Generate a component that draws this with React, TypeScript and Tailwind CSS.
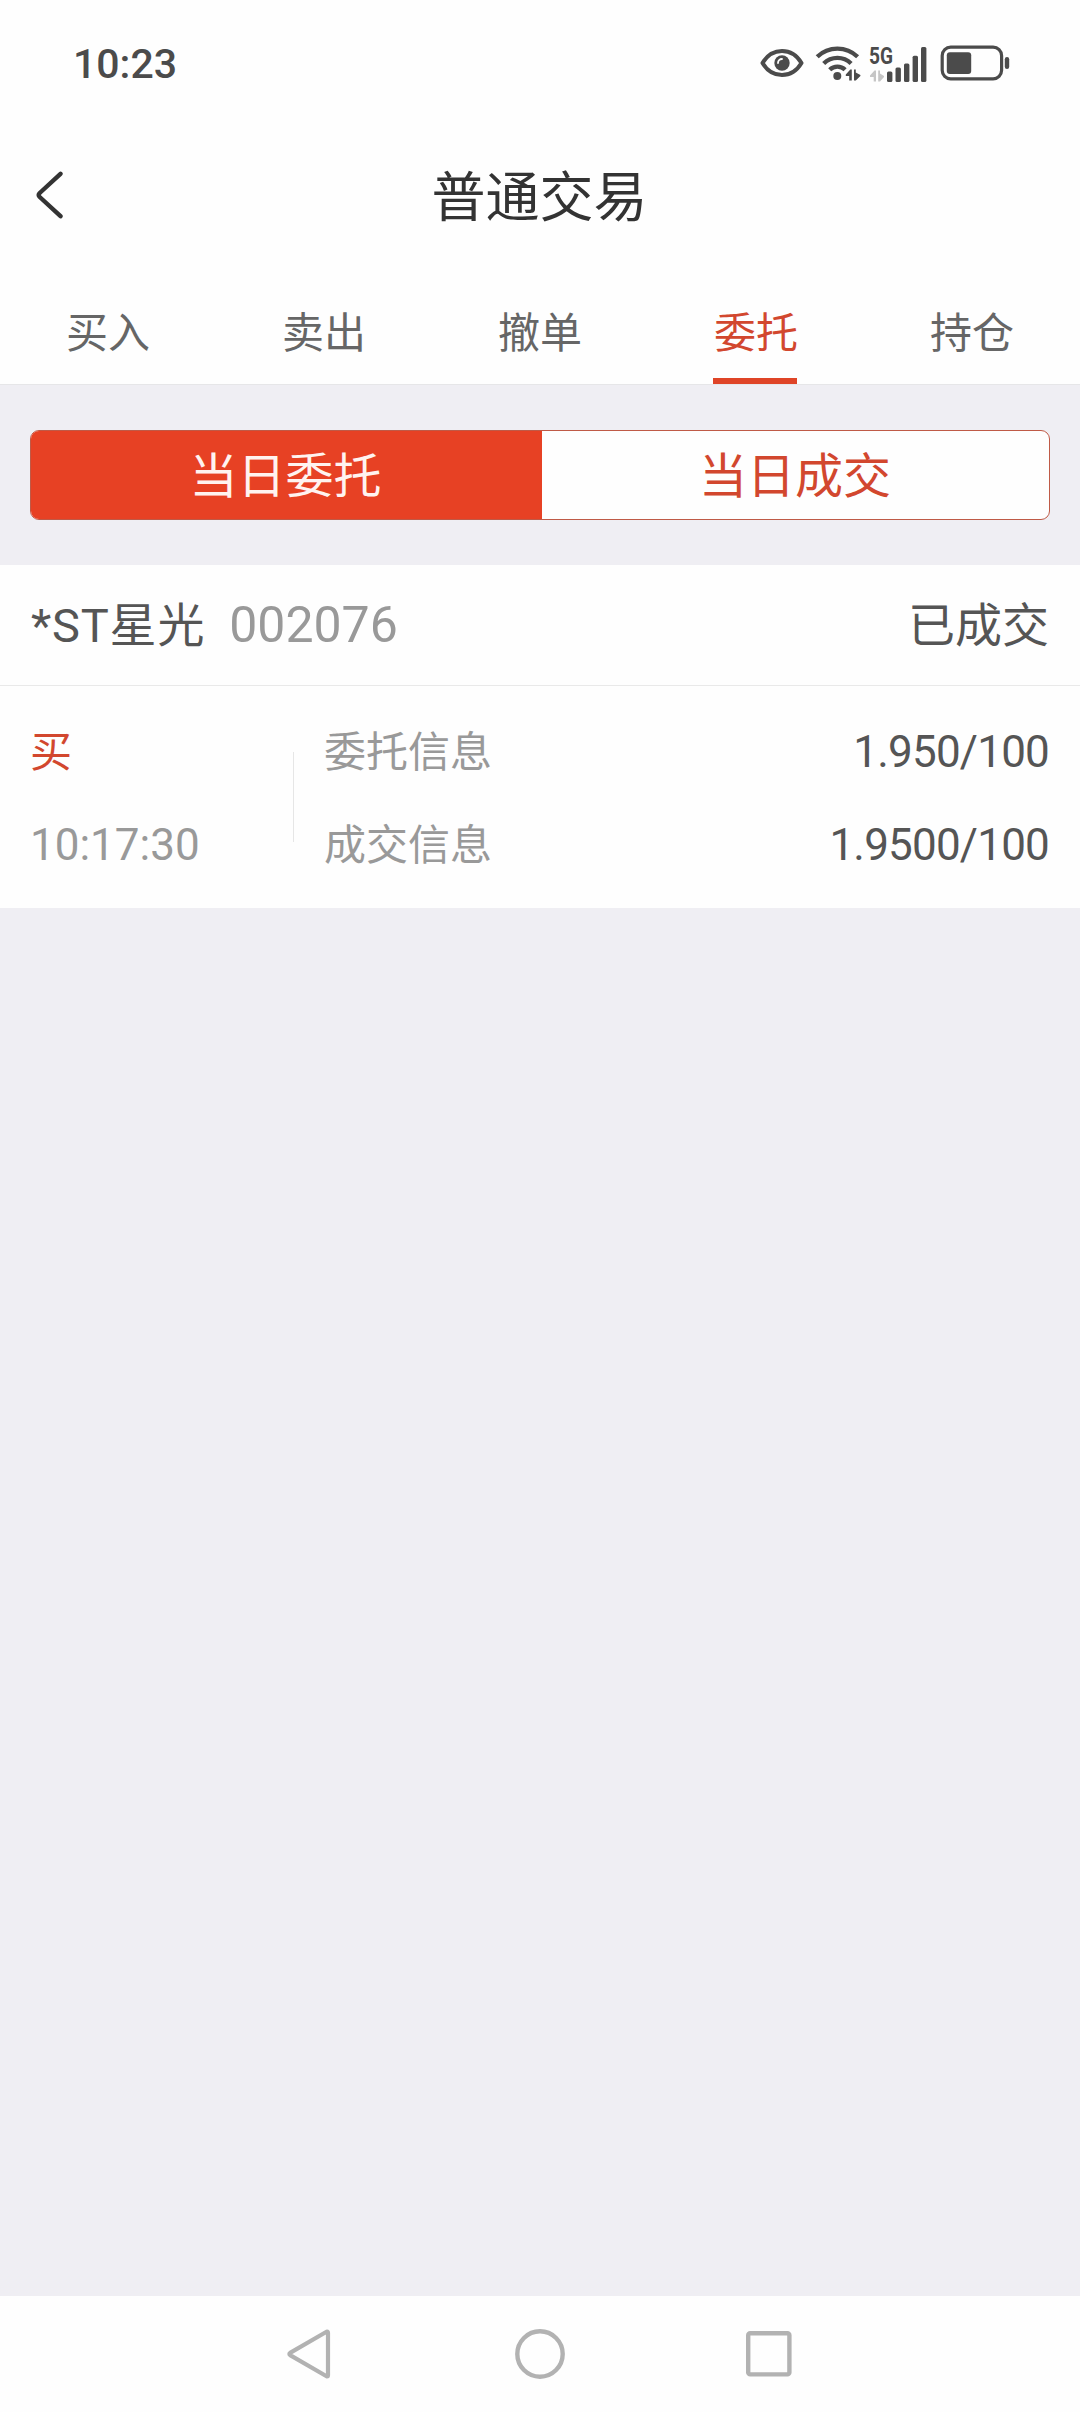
import clsx from "clsx";

const tabs = ["买入", "卖出", "撤单", "委托", "持仓"];

const orders = [
  {
    name: "*ST星光",
    code: "002076",
    status: "已成交",
    side: "买",
    time: "10:17:30",
    entrust: "1.950/100",
    deal: "1.9500/100",
  },
];

function EyeIcon() {
  return (
    <svg width="44" height="30" viewBox="0 0 44 30" fill="none">
      <path d="M2.500 15C7 7.500 14 3 22 3s15 4.500 19.500 12C37 22.500 30 27 22 27S7 22.500 2.500 15Z" stroke="#4b4b4b" strokeWidth="4" strokeLinejoin="round" />
      <circle cx="22" cy="15" r="7.700" fill="#4b4b4b" />
      <path d="M18 15a4 4 0 0 1 4-4" stroke="#fefefe" strokeWidth="1.800" strokeLinecap="round" />
    </svg>
  );
}

function WifiIcon() {
  return (
    <svg width="46" height="36" viewBox="0 0 46 36" fill="none">
      <g stroke="#4b4b4b" strokeWidth="4.300">
        <path d="M2.200 11.800a29 29 0 0 1 40.400 0" />
        <path d="M8.700 18.500a19.500 19.500 0 0 1 27.400 0" />
        <path d="M14.700 24.700a11 11 0 0 1 15.400 0" />
      </g>
      <circle cx="22.300" cy="31" r="4" fill="#4b4b4b" />
      <path d="M36.800 24.500v11h-2.600v-4.500h-3.400v-1.500l4.500-5zM39 24.500h1.800v3l4.600 2.500v1l-4.600 4.500H39z" fill="#4b4b4b" />
    </svg>
  );
}

function SignalIcon() {
  return (
    <svg width="60" height="50" viewBox="-2 -6 60 50">
      <text x="0" y="19.700" fontFamily="Roboto, sans-serif" fontSize="23.500" fontWeight="700" textLength="24" lengthAdjust="spacingAndGlyphs" fill="#4b4b4b">5G</text>
      <path d="M7 26.500v11H4.700V33H1v-1.500l4.500-5zM9.200 26.500H11v3l4 2.500v1l-4 4.500H9.200z" fill="#c6c6c6" />
      <g fill="#4b4b4b">
        <rect x="18" y="27.500" width="5.400" height="10.500" rx="1.500" />
        <rect x="26.500" y="23.500" width="5.400" height="14.500" rx="1.500" />
        <rect x="35" y="19.500" width="5.400" height="18.500" rx="1.500" />
        <rect x="43.600" y="11.700" width="5.400" height="26.300" rx="1.500" />
        <rect x="52" y="3" width="5.400" height="35" rx="1.500" />
      </g>
    </svg>
  );
}

function BatteryIcon() {
  return (
    <svg width="70" height="36" viewBox="0 0 70 36" fill="none">
      <rect x="2.200" y="2.200" width="59.400" height="31.600" rx="8.500" stroke="#4b4b4b" strokeWidth="3.200" />
      <rect x="6.800" y="7.300" width="24.400" height="21.600" rx="3" fill="#4b4b4b" />
      <rect x="64.800" y="12" width="4.400" height="12" rx="2.200" fill="#4b4b4b" />
    </svg>
  );
}

function StatusBar() {
  return (
    <div className="flex h-[126px] items-center justify-between pl-[73px] pr-[70px]">
      <span className="pt-[3px] font-[Roboto] text-[41px] font-medium text-[#4b4b4b]">10:23</span>
      <div className="flex items-center">
        <EyeIcon />
        <div className="ml-[11px]">
          <WifiIcon />
        </div>
        <div className="ml-[6px]">
          <SignalIcon />
        </div>
        <div className="ml-[13px]">
          <BatteryIcon />
        </div>
      </div>
    </div>
  );
}

function Header() {
  return (
    <header className="grid h-[133px] grid-cols-[200px_1fr_200px] items-center">
      <button className="pl-9 pt-[5px]">
        <svg width="28" height="48" viewBox="0 0 28 48" fill="none">
          <path d="M24.500 2.800 3.700 22Q1.800 24 3.700 26L24.500 45.200" stroke="#333" strokeWidth="4.400" strokeLinecap="round" strokeLinejoin="round" />
        </svg>
      </button>
      <h1 className="pr-px pt-[2px] text-center text-[54px] leading-[80px] text-[#333]">普通交易</h1>
    </header>
  );
}

function Tabs({ active }: { active: string }) {
  return (
    <nav className="grid h-[125px] grid-cols-5">
      {tabs.map((tab) => (
        <button key={tab} className="flex flex-col items-center justify-between pt-[41px]">
          <span className={clsx("text-[42px] leading-[60px]", tab === active ? "text-[#d2472e]" : "text-[#666]")}>
            {tab}
          </span>
          {tab === active && <span className="mr-[2px] h-[6px] w-[84px] bg-[#df4427]" />}
        </button>
      ))}
    </nav>
  );
}

function Segment() {
  return (
    <div className="border-t border-[#e6e6e8] px-[30px] pb-[45px] pt-[45px]">
      <div className="flex h-[90px] overflow-hidden rounded-[9px] border border-[#bf5a47] bg-[#fefefe] text-[48px] leading-[80px]">
        <button className="w-[511px] bg-[#e74124] pb-[6px] pr-[2px] text-[#fff3f0]">当日委托</button>
        <button className="flex-1 pb-[6px] pr-px text-[#d2472e]">当日成交</button>
      </div>
    </div>
  );
}

function OrderCard({ order }: { order: (typeof orders)[number] }) {
  return (
    <section className="bg-[#fefefe]">
      <div className="flex h-[121px] items-baseline border-b border-[#e9e9e9] px-[31px] pt-[27px] font-[Roboto,'Noto_Sans_CJK_SC',sans-serif] leading-[66px]">
        <span className="text-[47px] tracking-[0.8px] text-[#555]">{order.name}</span>
        <span className="ml-[24px] text-[50px] text-[#999]">{order.code}</span>
        <span className="ml-auto text-[47px] text-[#555]">{order.status}</span>
      </div>
      <div className="flex h-[222px] items-start pt-4 text-[42px] leading-[93px]">
        <div className="w-[293px] pl-[30px]">
          <div className="text-[#d2472e]">{order.side}</div>
          <div className="pt-1 font-[Roboto] text-[44px] text-[#999]">{order.time}</div>
        </div>
        <div className="mt-[50px] h-[90px] w-px bg-[#e6e6e6]" />
        <div className="flex-1 pl-[30px] pr-[31px]">
          <div className="flex h-[93px] justify-between">
            <span className="text-[#999]">委托信息</span>
            <span className="pt-1 font-[Roboto] text-[44px] tracking-[-0.8px] text-[#555]">{order.entrust}</span>
          </div>
          <div className="flex h-[93px] justify-between">
            <span className="text-[#999]">成交信息</span>
            <span className="pt-1 font-[Roboto] text-[44px] tracking-[-0.8px] text-[#555]">{order.deal}</span>
          </div>
        </div>
      </div>
    </section>
  );
}

function NavigationBar() {
  return (
    <footer className="flex h-[116px] items-start bg-[#fefefe] pl-[286px] pt-8">
      <svg width="46" height="52" viewBox="0 0 46 52" fill="none">
        <path d="M41 3.500 4.500 24.600Q2.200 26 4.500 27.400L41 48.500Q42 48.500 42 47V5Q42 3.500 41 3.500Z" stroke="#b2b2b2" strokeWidth="4.200" strokeLinejoin="round" />
      </svg>
      <svg className="ml-[182px]" width="52" height="52" viewBox="0 0 52 52" fill="none">
        <circle cx="26" cy="26" r="22.700" stroke="#b2b2b2" strokeWidth="4.400" />
      </svg>
      <svg className="ml-[179px]" width="48" height="52" viewBox="0 0 48 52" fill="none">
        <rect x="3.200" y="5.200" width="41.200" height="41.200" rx="2" stroke="#b2b2b2" strokeWidth="4.400" />
      </svg>
    </footer>
  );
}

export default function App() {
  return (
    <div className="flex h-[2412px] w-[1080px] flex-col bg-[#efeef3] font-['Noto_Sans_CJK_SC',sans-serif]">
      <div className="bg-[#fefefe]">
        <StatusBar />
        <Header />
        <Tabs active="委托" />
      </div>
      <Segment />
      <main className="flex-1">
        {orders.map((order) => (
          <OrderCard key={order.time} order={order} />
        ))}
      </main>
      <NavigationBar />
    </div>
  );
}
